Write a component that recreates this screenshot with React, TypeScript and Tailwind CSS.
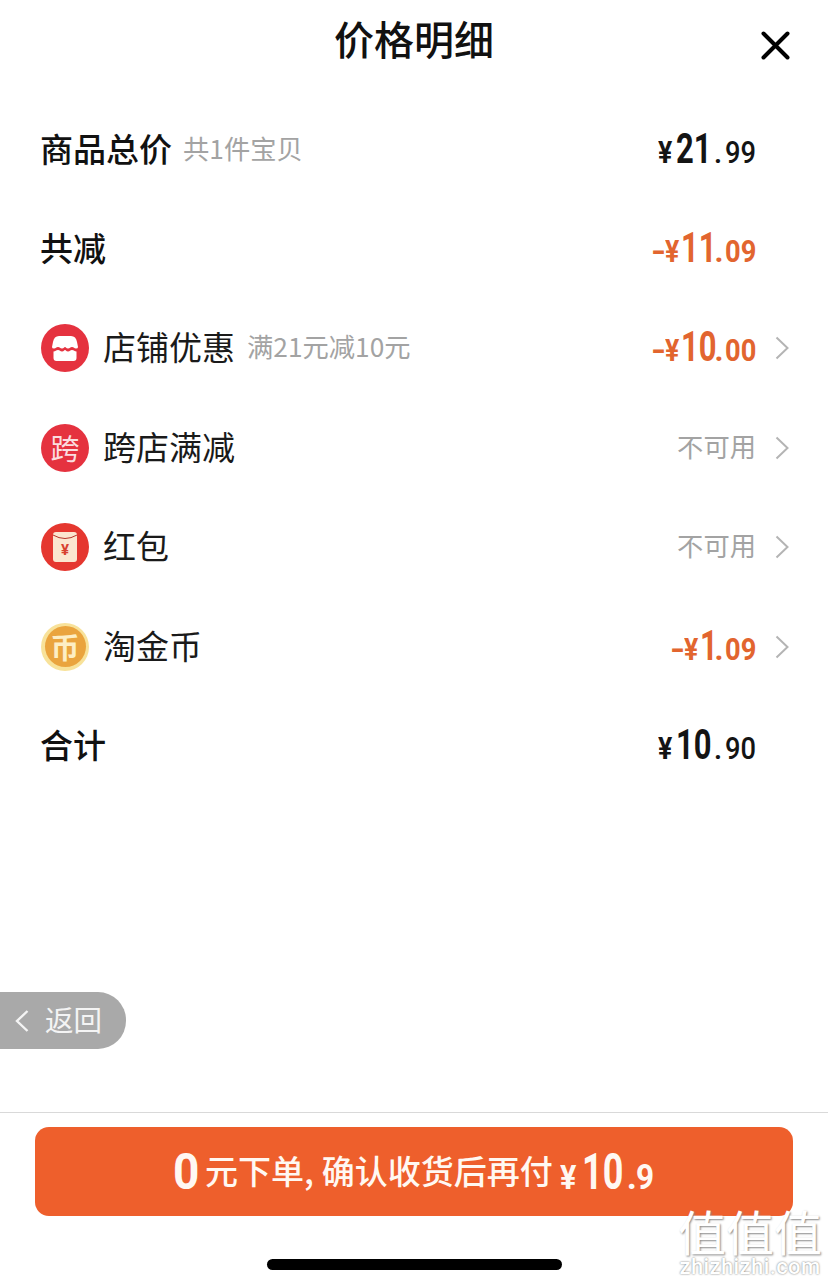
import React from 'react';

const CJK = "font-['Noto_Sans_CJK_SC',sans-serif]";
const NUM = "font-['Roboto','Liberation_Sans',sans-serif]";

interface PriceProps {
  whole: string;
  cents: string;
  minus?: boolean;
}

// the digits in the shot are a narrow DIN-like face, so Roboto gets squeezed.
// boxes are sized per character because a scale does not change layout width
const Price: React.FC<PriceProps> = ({ whole, cents, minus }) => {
  const wholeWidth = minus ? (whole.length === 1 ? 13 : whole.length * 16) : whole.length * 17.5;
  return (
    <div
      className={`${NUM} mb-[3px] flex items-baseline justify-end whitespace-nowrap leading-none ${minus ? 'text-[#e2652f]' : 'text-[#141414]'}`}
    >
      {minus && <span className="inline-block w-[14px] origin-left scale-x-[1.25] text-[31px] font-bold">-</span>}
      <span className={`inline-block origin-left scale-x-[0.86] text-[31px] font-bold ${minus ? 'w-[16px]' : 'w-[18px]'}`}>¥</span>
      <span className="inline-block origin-left scale-x-[0.72] text-[43px] font-bold" style={{ width: wholeWidth }}>
        {whole}
      </span>
      <span className={`inline-block text-center text-[31px] ${minus ? 'w-[12px] font-bold' : 'w-[14px] font-medium'}`}>.</span>
      <span className={`inline-block w-[30px] origin-left scale-x-[0.88] text-[31px] ${minus ? 'font-bold' : 'font-medium'}`}>
        {cents}
      </span>
    </div>
  );
};

const Chevron = () => (
  <svg width="14" height="24" viewBox="0 0 14 24" fill="none" stroke="#b4b4b4" strokeWidth="2">
    <path d="M1.500 1.500 12.500 12 1.500 22.500" />
  </svg>
);

const ShopIcon = () => (
  <div className="flex h-12 w-12 items-center justify-center rounded-full bg-[#e5323f]">
    <svg width="26" height="25" viewBox="0 0 26 25">
      <path d="M7 0h12q5 0 6 6l1 5q0 1.500-2 1.500c-2 0-2-1.500-4-1.500s-2 1.500-4 1.500-2-1.500-3-1.500-1 1.500-3 1.500-2-1.500-4-1.500-2 1.500-4 1.500q-2 0-2-1.500l1-5q1-6 6-6z" fill="#fff" />
      <path d="M1.500 15.500c2 0 2.500-1.500 4.500-1.500s2 1.500 4 1.500 2-1.500 3-1.500 1 1.500 3 1.500 2-1.500 4-1.500 2.500 1.500 4.500 1.500V22q0 3-3 3H4.500q-3 0-3-3z" fill="#fff" />
    </svg>
  </div>
);

const CrossIcon = () => (
  <div className={`${CJK} flex h-12 w-12 items-center justify-center rounded-full bg-[#e5323f] text-[29px] leading-none text-[#fbdde0]`}>
    跨
  </div>
);

const PacketIcon = () => (
  <div className="flex h-12 w-12 items-center justify-center rounded-full bg-[#e5372f]">
    <div className={`${NUM} relative flex h-[30px] w-[24px] items-center justify-center rounded-[3px] bg-[#fbe6cf] pt-[7px] text-[15px] font-bold leading-none text-[#d8412f]`}>
      <svg className="absolute left-0 top-0" width="24" height="9" viewBox="0 0 24 9" fill="none" stroke="#b5352a" strokeWidth="1">
        <path d="M0 3q12 7 24 0" />
      </svg>
      ¥
    </div>
  </div>
);

const CoinIcon = () => (
  <div className="flex h-12 w-12 items-center justify-center rounded-full bg-[#f8e29a]">
    <div className={`${CJK} flex h-[41px] w-[41px] items-center justify-center rounded-full bg-[#eaa43e] text-[29px] font-bold leading-none text-[#fdeec4]`}>
      币
    </div>
  </div>
);

const Row: React.FC<{ children: React.ReactNode; right?: React.ReactNode; chevron?: boolean }> = ({ children, right, chevron }) => (
  <div className="flex h-[99.4px] items-center justify-between pl-[40px] pr-[39px]">
    <div className="flex items-center">{children}</div>
    <div className="flex items-center">
      {right}
      <div className="ml-[20px] w-[14px]">{chevron && <Chevron />}</div>
    </div>
  </div>
);

const Label = ({ children }: { children: React.ReactNode }) => (
  <span className="mb-[3px] ml-[14px] text-[33px] leading-none text-[#1a1a1a]">{children}</span>
);

const Bold = ({ children }: { children: React.ReactNode }) => (
  <span className="mb-[3px] text-[33px] font-medium leading-none text-[#111]">{children}</span>
);

const Note = ({ children, className = '' }: { children: React.ReactNode; className?: string }) => (
  <span className={`mb-[4px] text-[26.3px] leading-none text-[#a3a3a3] ${className}`}>{children}</span>
);

const Watermark = () => (
  <div className="absolute left-[677px] top-[1204px] flex w-[146px] flex-col items-center">
    <span className="text-[48px] leading-[52px] text-white [text-shadow:1px_1px_2px_#888]">值值值</span>
    <span className={`${NUM} text-[22px] font-medium leading-[22px] tracking-[0.4px] text-white [text-shadow:0_0_2px_#666]`}>zhizhizhi.com</span>
  </div>
);

export default function App() {
  return (
    <div className={`${CJK} relative flex h-[1287px] w-[828px] flex-col overflow-hidden bg-white`}>
      <div className="relative flex h-[100px] justify-center pt-[11px]">
        <h1 className="text-[40px] font-medium leading-[54px] text-[#111]">价格明细</h1>
        <svg className="absolute left-[760px] top-[30px]" width="31" height="31" viewBox="0 0 31 31" stroke="#000" strokeWidth="4" strokeLinecap="round">
          <path d="M3.500 3.500 27.500 27.500M27.500 3.500 3.500 27.500" />
        </svg>
      </div>

      <Row right={<Price whole="21" cents="99" />}>
        <Bold>商品总价</Bold>
        <Note className="ml-[11px]">共1件宝贝</Note>
      </Row>
      <Row right={<Price whole="11" cents="09" minus />}>
        <Bold>共减</Bold>
      </Row>
      <Row right={<Price whole="10" cents="00" minus />} chevron>
        <div className="ml-px"><ShopIcon /></div>
        <Label>店铺优惠</Label>
        <Note className="ml-[12px]">满21元减10元</Note>
      </Row>
      <Row right={<Note className="-mr-px">不可用</Note>} chevron>
        <div className="ml-px"><CrossIcon /></div>
        <Label>跨店满减</Label>
      </Row>
      <Row right={<Note className="-mr-px">不可用</Note>} chevron>
        <div className="ml-px"><PacketIcon /></div>
        <Label>红包</Label>
      </Row>
      <Row right={<Price whole="1" cents="09" minus />} chevron>
        <div className="ml-px"><CoinIcon /></div>
        <Label>淘金币</Label>
      </Row>
      <Row right={<Price whole="10" cents="90" />}>
        <Bold>合计</Bold>
      </Row>

      <div className="absolute left-0 top-[992px] flex h-[57px] w-[126px] items-center rounded-r-[28px] bg-[#a9a9a9] pl-[14px] text-[#f4f4f4]">
        <svg width="16" height="24" viewBox="0 0 16 24" fill="none" stroke="#f4f4f4" strokeWidth="2.400">
          <path d="M13.500 2 3 12 13.500 22" />
        </svg>
        <span className="mb-[3px] ml-[15px] text-[28.5px] leading-none">返回</span>
      </div>

      <div className="mt-auto h-[175px] border-t border-[#d9d9d9] px-[35px] pt-[14px]">
        <div className="flex h-[89px] items-center rounded-[14px] bg-[#ee5f2c] pl-[138px] font-medium text-[#fff8f2]">
          <span className={`${NUM} inline-block w-[32px] origin-left scale-x-[0.92] text-[50px] font-bold leading-none`}>0</span>
          <span className="mb-[2px] text-[33px] leading-none">元下单,</span>
          <span className="mb-[2px] ml-[8px] text-[33px] leading-none">确认收货后再付</span>
          <span className={`${NUM} ml-[7px] flex items-baseline whitespace-nowrap font-bold leading-none`}>
            <span className="inline-block w-[22px] origin-left scale-x-[0.9] text-[34px]">¥</span>
            <span className="inline-block w-[45px] origin-left scale-x-[0.72] text-[50px]">10</span>
            <span className="inline-block w-[9px] text-[35px]">.</span>
            <span className="inline-block w-[18px] origin-left scale-x-[0.9] text-[35px]">9</span>
          </span>
        </div>
      </div>

      <div className="absolute left-[267px] top-[1259px] h-[11px] w-[295px] rounded-full bg-black" />

      {/* site watermark, bottom right */}
      <Watermark />
    </div>
  );
}
